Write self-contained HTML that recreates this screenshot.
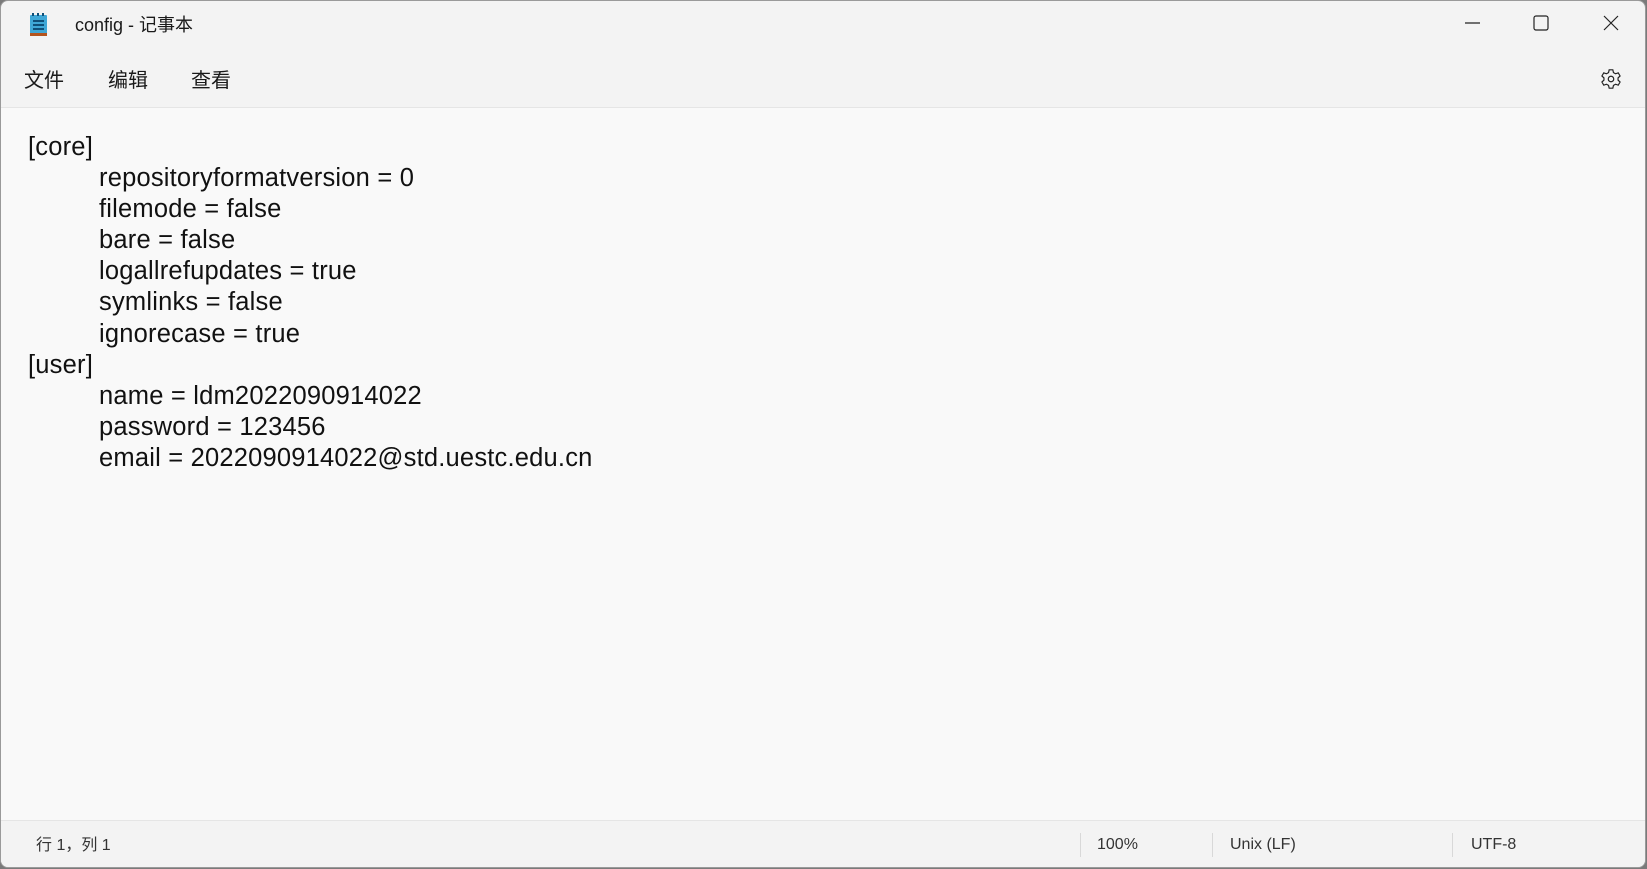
<!DOCTYPE html>
<html><head><meta charset="utf-8"><style>
*{margin:0;padding:0;box-sizing:border-box}
html,body{width:1647px;height:869px;overflow:hidden;background:#7a7a7a;font-family:"Liberation Sans","Noto Sans CJK SC",sans-serif}
.win{position:absolute;left:0;top:0;width:1646px;height:868px;background:#f3f3f3;border:1px solid #9a9a9a;border-radius:8px;overflow:hidden}
.title{position:absolute;left:74px;top:12px;font-size:18px;line-height:24px;color:#1a1a1a}
.menu{position:absolute;top:67px;font-size:20px;line-height:26px;color:#1a1a1a}
.edit{position:absolute;left:0;top:106px;width:100%;height:713px;background:#f9f9f9;border-top:1px solid #e5e5e5}
.txt{position:absolute;left:27px;top:24px;font-size:25.5px;letter-spacing:0.2px;line-height:31.1px;color:#111;white-space:pre}
.in{padding-left:71px}
.status{position:absolute;left:0;top:819px;width:100%;height:50px;border-top:1px solid #e5e5e5;background:#f3f3f3;font-size:16px;color:#333}
.status span{position:absolute;top:14px;line-height:20px;height:20px}
.sep{position:absolute;top:12px;width:1px;height:24px;background:#d8d8d8}
</style></head><body>
<div class="win">
<svg style="position:absolute;left:28px;top:11px" width="20" height="26" viewBox="0 0 20 26">
<rect x="1" y="3" width="17" height="19" rx="1" fill="#3fa7d6"/>
<rect x="1" y="21" width="17" height="3" fill="#b3541e"/>
<rect x="4" y="8" width="11" height="2" fill="#0f4f78"/><rect x="4" y="12" width="11" height="2" fill="#0f4f78"/><rect x="4" y="16" width="11" height="2" fill="#0f4f78"/>
<rect x="3" y="1" width="2" height="3" fill="#0f4f78"/><rect x="8" y="1" width="2" height="3" fill="#0f4f78"/><rect x="13" y="1" width="2" height="3" fill="#0f4f78"/>
</svg>
<div class="title">config - 记事本</div>
<svg style="position:absolute;left:1463px;top:14px" width="160" height="20" viewBox="0 0 160 20" fill="none" stroke="#222" stroke-width="1.2">
<line x1="1" y1="8" x2="16" y2="8"/>
<rect x="70" y="1" width="14" height="14" rx="2"/>
<path d="M140 1 L154 15 M154 1 L140 15"/>
</svg>
<svg style="position:absolute;left:1599px;top:67px" width="22" height="22" viewBox="0 0 24 24" fill="none" stroke="#222" stroke-width="1.3">
<circle cx="12" cy="12" r="3"/>
<path d="M10 2h4l.7 3 2.3 1.3 2.9-1 2 3.4-2.2 2.1v2.4l2.2 2.1-2 3.4-2.9-1L14.7 19 14 22h-4l-.7-3L7 17.7l-2.9 1-2-3.4 2.2-2.1v-2.4L2.1 8.7l2-3.4 2.9 1L9.3 5z"/>
</svg>
<div class="menu" style="left:23px">文件</div>
<div class="menu" style="left:107px">编辑</div>
<div class="menu" style="left:190px">查看</div>
<div class="edit"><div class="txt">[core]
<span class="in">repositoryformatversion = 0</span>
<span class="in">filemode = false</span>
<span class="in">bare = false</span>
<span class="in">logallrefupdates = true</span>
<span class="in">symlinks = false</span>
<span class="in">ignorecase = true</span>
[user]
<span class="in">name = ldm2022090914022</span>
<span class="in">password = 123456</span>
<span class="in">email = 2022090914022@std.uestc.edu.cn</span></div></div>
<div class="status">
<span style="left:35px;top:15px">行 1，列 1</span>
<div class="sep" style="left:1079px"></div><span style="left:1096px">100%</span>
<div class="sep" style="left:1211px"></div><span style="left:1229px">Unix (LF)</span>
<div class="sep" style="left:1451px"></div><span style="left:1470px">UTF-8</span>
</div>
</div>
</body></html>
